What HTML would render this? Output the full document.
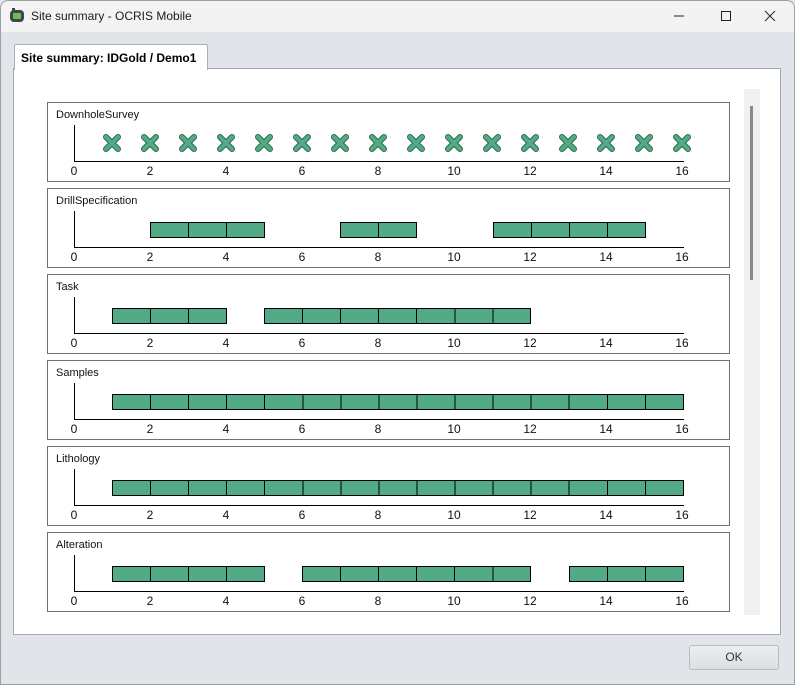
<!DOCTYPE html>
<html><head><meta charset="utf-8"><style>
*{margin:0;padding:0;box-sizing:border-box}
body{width:795px;height:685px;background:#e1e5e9;font-family:"Liberation Sans","DejaVu Sans",sans-serif;position:relative;overflow:hidden}
.fr{position:absolute;left:0;top:0;width:795px;height:685px;border:1px solid #9aa0a6;border-radius:8px 8px 0 0;z-index:5;pointer-events:none}
.tb{position:absolute;left:0;top:0;width:795px;height:32px;background:#f3f3f3;border-radius:8px 8px 0 0}
.tb .t{position:absolute;left:31px;top:9px;font-size:12px;color:#1a1a1a}
.tab{position:absolute;left:14px;top:44px;width:194px;height:26px;background:#fff;border:1px solid #a8b0b8;border-bottom:none;border-radius:2px 2px 0 0;font-size:12px;font-weight:bold;padding:6px 0 0 6px;z-index:2}
.cont{position:absolute;left:13px;top:68px;width:768px;height:567px;background:#fff;border:1px solid #a0a8b0}
.p{position:absolute;left:47px;width:683px;height:80px;border:1px solid #707070;background:#fff}
.p .n{position:absolute;left:8px;top:6px;font-size:11px;color:#111}
.ax{position:absolute;left:0;top:0}
.b{position:absolute;top:33px;height:16px;border:1px solid #000;background:repeating-linear-gradient(to right,#52ab86 0 37.06px,#000 37.06px 38.06px)}
.sb{position:absolute;left:744px;top:89px;width:16px;height:526px;background:#f0f0f0}
.th{position:absolute;left:750px;top:106px;width:3px;height:174px;background:#8a8a8a}
.ok{position:absolute;left:689px;top:645px;width:90px;height:25px;border:1px solid #b8bcc0;border-radius:3px;background:linear-gradient(#eceef0,#dcdfe2);font-size:12px;text-align:center;line-height:23px;color:#333}
</style></head><body>
<div class="fr"></div>
<div class="tb"><svg style="position:absolute;left:9px;top:7px" width="16" height="16"><rect x="1" y="3" width="14" height="12" rx="4" fill="#3b4650"/><rect x="4" y="6" width="8" height="6" rx="1" fill="#6cc04a"/><rect x="3" y="1" width="3" height="4" fill="#3b4650"/></svg><span class="t">Site summary - OCRIS Mobile</span>
<svg style="position:absolute;left:674px;top:10px" width="110" height="12"><line x1="0" y1="6" x2="10" y2="6" stroke="#222"/><rect x="47.5" y="1.5" width="9" height="9" fill="none" stroke="#222"/><path d="M91 1L101 11M101 1L91 11" stroke="#222"/></svg></div>
<div class="tab">Site summary: IDGold / Demo1</div>
<div class="cont"></div>
<div class="sb"></div><div class="th"></div>

<svg width="0" height="0" style="position:absolute"><defs>
<g id="ax"><line x1="26.5" y1="22" x2="26.5" y2="58.5" stroke="#000"/><line x1="26" y1="58.5" x2="636" y2="58.5" stroke="#000"/>
<g font-size="12" text-anchor="middle" font-family="Liberation Sans,sans-serif" fill="#111"><text x="26" y="72">0</text><text x="102" y="72">2</text><text x="178" y="72">4</text><text x="254" y="72">6</text><text x="330" y="72">8</text><text x="406" y="72">10</text><text x="482" y="72">12</text><text x="558" y="72">14</text><text x="634" y="72">16</text></g></g>
<g id="x"><path d="M-6 -6L6 6M6 -6L-6 6" stroke="#2c6a4c" stroke-width="6" stroke-linecap="round"/><path d="M-6 -6L6 6M6 -6L-6 6" stroke="#52ab86" stroke-width="4" stroke-linecap="round"/></g>
</defs></svg>

<div class="p" style="top:102px"><svg class="ax" width="681" height="78"><use href="#ax"/>
<g transform="translate(0,40)"><use href="#x" x="64"/><use href="#x" x="102"/><use href="#x" x="140"/><use href="#x" x="178"/><use href="#x" x="216"/><use href="#x" x="254"/><use href="#x" x="292"/><use href="#x" x="330"/><use href="#x" x="368"/><use href="#x" x="406"/><use href="#x" x="444"/><use href="#x" x="482"/><use href="#x" x="520"/><use href="#x" x="558"/><use href="#x" x="596"/><use href="#x" x="634"/></g></svg><span class="n">DownholeSurvey</span></div>

<div class="p" style="top:188px"><svg class="ax" width="681" height="78"><use href="#ax"/></svg><span class="n">DrillSpecification</span>
<div class="b" style="left:102px;width:115px"></div><div class="b" style="left:292px;width:77px"></div><div class="b" style="left:444.7px;width:153px"></div></div>

<div class="p" style="top:274px"><svg class="ax" width="681" height="78"><use href="#ax"/></svg><span class="n">Task</span>
<div class="b" style="left:64px;width:115px"></div><div class="b" style="left:216.3px;width:267px"></div></div>

<div class="p" style="top:360px"><svg class="ax" width="681" height="78"><use href="#ax"/></svg><span class="n">Samples</span>
<div class="b" style="left:64px;width:571.5px"></div></div>

<div class="p" style="top:446px"><svg class="ax" width="681" height="78"><use href="#ax"/></svg><span class="n">Lithology</span>
<div class="b" style="left:64px;width:571.5px"></div></div>

<div class="p" style="top:532px"><svg class="ax" width="681" height="78"><use href="#ax"/></svg><span class="n">Alteration</span>
<div class="b" style="left:64px;width:153px"></div><div class="b" style="left:254.4px;width:229px"></div><div class="b" style="left:520.8px;width:115px"></div></div>

<div class="ok">OK</div>
</body></html>
